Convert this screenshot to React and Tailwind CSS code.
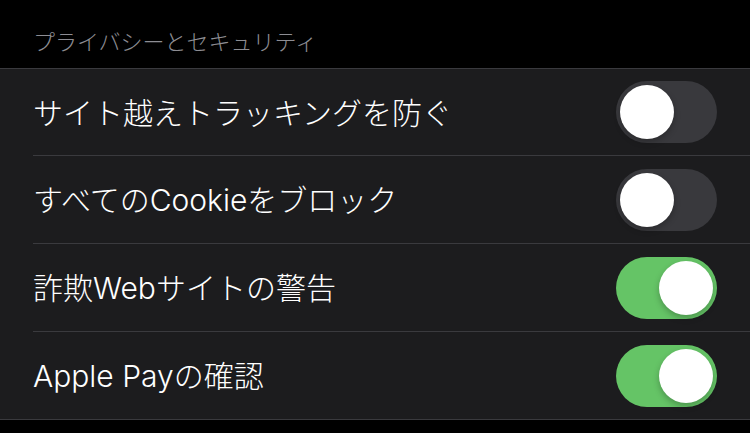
import React, { useState } from 'react';

const rows = [
  { label: 'サイト越えトラッキングを防ぐ', on: false },
  { label: 'すべてのCookieをブロック', on: false },
  { label: '詐欺Webサイトの警告', on: true },
  { label: 'Apple Payの確認', on: true },
];

const Toggle = ({ on, onClick }) => (
  <button
    onClick={onClick}
    className={`relative flex h-[62px] w-[101px] shrink-0 items-center rounded-full px-[4px] ${
      on ? 'justify-end bg-[#65c466]' : 'justify-start bg-[#39393d]'
    }`}
  >
    <span className="h-[54px] w-[54px] rounded-full bg-white shadow-[0_3px_6px_rgba(0,0,0,0.25)]" />
  </button>
);

const App = () => {
  const [state, setState] = useState(rows.map((r) => r.on));

  const flip = (i) => setState((prev) => prev.map((v, j) => (j === i ? !v : v)));

  return (
    <div
      className="min-h-[433px] w-full bg-black"
      style={{ fontFamily: 'Inter, "Noto Sans CJK JP", sans-serif' }}
    >
      <div className="h-[68px] px-[33px] pt-[27px] text-[22px] leading-[30px] font-light text-[#8d8d93]">
        プライバシーとセキュリティ
      </div>
      <div className="border-y border-[#3a3a3e] bg-[#1c1c1e]">
        {rows.map((row, i) => (
          <div key={row.label} className="pl-[33px]">
            <div
              className={`flex items-center justify-between pr-[33px] ${
                i > 0 ? 'h-[88px] border-t border-[#3a3a3e]' : 'h-[86px]'
              }`}
            >
              <span className="pt-[2px] text-[30px] font-light text-white">{row.label}</span>
              <Toggle on={state[i]} onClick={() => flip(i)} />
            </div>
          </div>
        ))}
      </div>
    </div>
  );
};

export default App;
